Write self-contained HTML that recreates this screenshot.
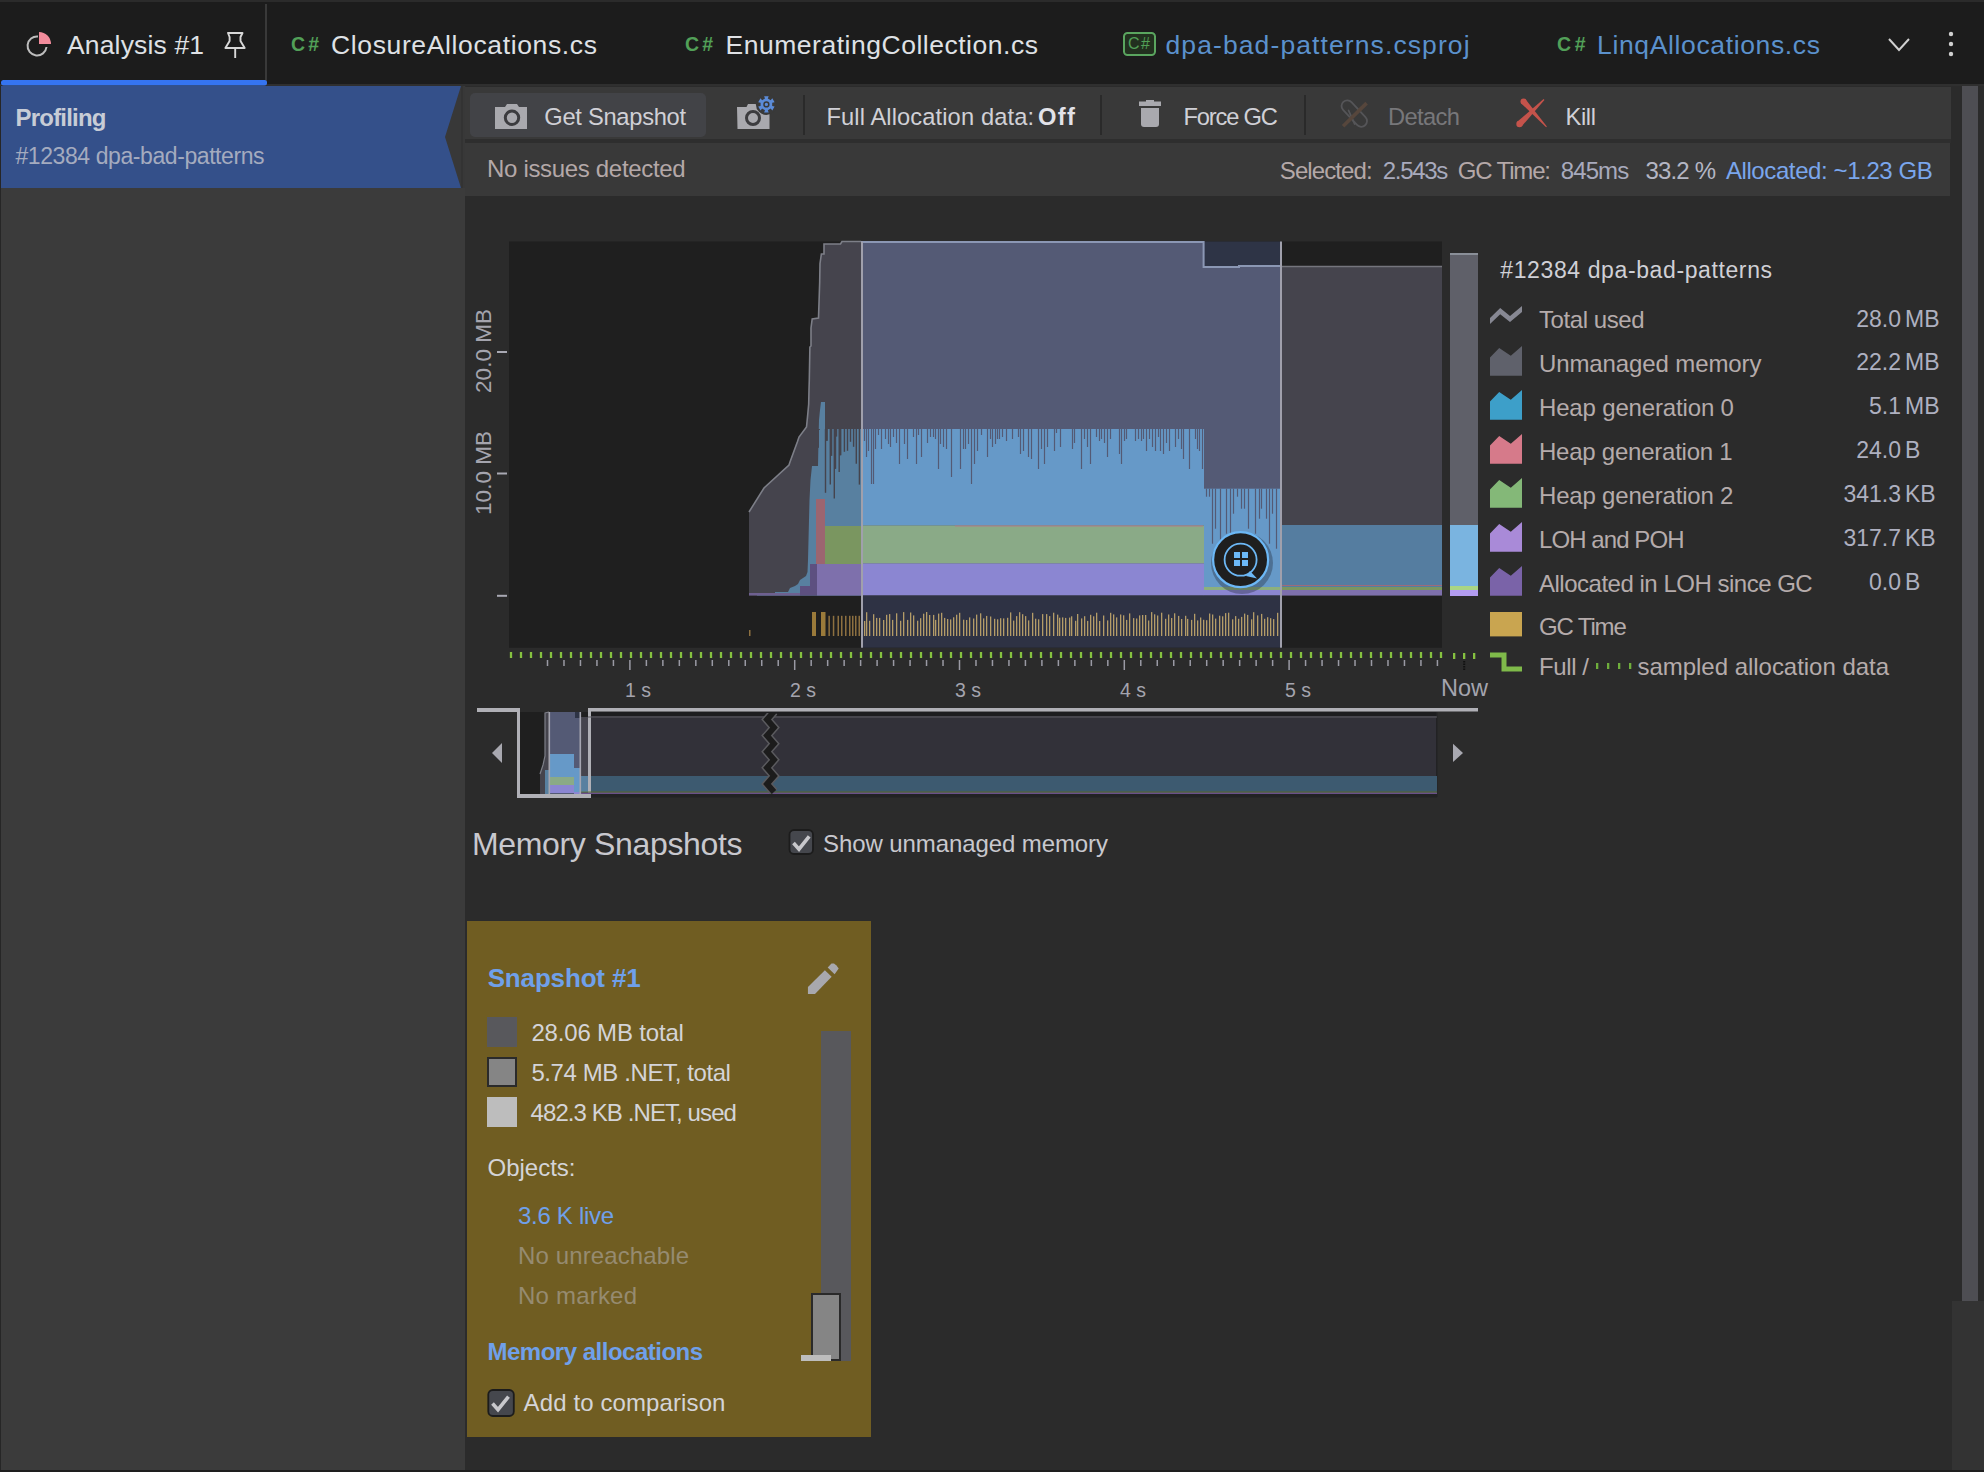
<!DOCTYPE html><html><head><meta charset="utf-8"><style>
html,body{margin:0;padding:0;width:1984px;height:1472px;overflow:hidden;background:#2b2b2b}
.t{position:absolute;white-space:pre;font-family:"Liberation Sans",sans-serif;line-height:1}
svg{position:absolute;left:0;top:0}
</style></head><body>
<svg width="1984" height="1472"><rect x="0" y="0" width="1984" height="1472" fill="#2b2b2b" />
<rect x="0" y="0" width="1984" height="2" fill="#2b2b2b" />
<rect x="0" y="2" width="1984" height="82" fill="#1c1c1c" />
<rect x="0" y="84" width="1984" height="2" fill="#2f2f2f" />
<rect x="265" y="4" width="2" height="80" fill="#393939" />
<rect x="1" y="80" width="266" height="5.5" rx="2.5" fill="#3574f0"/>
<rect x="0" y="86" width="465" height="1386" fill="#3b3b3b" />
<rect x="0" y="86" width="1" height="1386" fill="#262626" />
<rect x="445" y="86" width="20" height="102" fill="#383838" />
<rect x="461" y="86" width="2" height="102" fill="#333333" />
<polygon points="1,86 461,86 445,137 461,188 1,188" fill="#34508a" />
<rect x="465" y="86" width="1" height="110" fill="#2e2e2e" />
<rect x="465" y="87" width="1486" height="52" fill="#393939" />
<rect x="465" y="139" width="1486" height="4" fill="#2e2e2e" />
<rect x="465" y="143" width="1485" height="53" fill="#393939" />
<rect x="470" y="93" width="236" height="44" rx="5" fill="#424347"/>
<rect x="803" y="95" width="2" height="40" fill="#2a2a2a" />
<rect x="1100" y="95" width="2" height="40" fill="#2a2a2a" />
<rect x="1304" y="95" width="2" height="40" fill="#2a2a2a" />
<rect x="1962" y="86" width="16" height="1215" fill="#4e4e53" />
<rect x="1952" y="1301" width="32" height="169" fill="#333333" />
<rect x="0" y="1470" width="1984" height="2" fill="#1e1e1e" />
<path d="M 46.5 47 A 9.5 9.5 0 1 1 38 36.5" fill="none" stroke="#bdbdbd" stroke-width="2"/>
<path d="M 39 32 A 12 12 0 0 1 51 44 L 39 44 Z" fill="#f28c9c"/>
<path d="M228 33 h14.5 l-2 4 v4 l4.2 7 h-19.3 l4.2 -7 v-4 z M235.2 48.5 v9.5" fill="none" stroke="#d8d8d8" stroke-width="1.9" stroke-linejoin="round"/>
<rect x="1124" y="33" width="31" height="22" rx="3.5" fill="#22301f" stroke="#5aa55f" stroke-width="2"/>
<path d="M1889 39 L1899 50 L1909 39" fill="none" stroke="#d0d0d0" stroke-width="2"/>
<circle cx="1951" cy="34" r="2.2" fill="#d0d0d0"/>
<circle cx="1951" cy="44" r="2.2" fill="#d0d0d0"/>
<circle cx="1951" cy="54" r="2.2" fill="#d0d0d0"/>
<path d="M495 107 h10 l2 -3 h10 l2 3 h8 v22 h-32 z" fill="#a9a9ae"/>
<circle cx="512" cy="117.7" r="6.7" fill="none" stroke="#3c3c3f" stroke-width="3"/>
<path d="M737 107 h10 l2 -3 h9 v3 h4 l0 0 v0 h0 l0 0 v0" fill="none"/>
<path d="M737 107 h9.5 l1.5 -3 h9 l1.5 3 h11 v22 h-32 z" fill="#a9a9ae"/>
<circle cx="753" cy="118" r="6.5" fill="none" stroke="#3c3c3f" stroke-width="3"/>
<circle cx="766.4" cy="104.4" r="10.5" fill="#393939"/>
<polygon points="764.1,96.2 768.7,96.2 767.8,98.6 770.7,100.2 772.3,98.3 774.6,102.3 772.2,102.7 772.2,106.1 774.6,106.5 772.3,110.5 770.7,108.6 767.8,110.2 768.7,112.6 764.1,112.6 765.0,110.2 762.1,108.6 760.5,110.5 758.2,106.5 760.6,106.1 760.6,102.7 758.2,102.3 760.5,98.3 762.1,100.2 765.0,98.6" fill="#5b8bd8"/>
<circle cx="766.4" cy="104.4" r="2.4" fill="none" stroke="#393939" stroke-width="1.5"/>
<path d="M1139 101.5 h7 v-1.5 h8 v1.5 h7 v4.5 h-22 z" fill="#a9a9ae"/>
<path d="M1141 108 h18 v16 a3 3 0 0 1 -3 3 h-12 a3 3 0 0 1 -3 -3 z" fill="#a9a9ae"/>
<rect x="1338.3" y="107.8" width="32" height="11.5" rx="5.75" transform="rotate(47 1354.3 113.5)" fill="none" stroke="#555558" stroke-width="1.8"/>
<line x1="1348.6" y1="110.5" x2="1354.6" y2="124" stroke="#555558" stroke-width="1.8" stroke-linecap="round"/>
<line x1="1343.1" y1="126.3" x2="1366.6" y2="103.1" stroke="#56463c" stroke-width="3.6"/>
<polygon points="1521.28,103.52 1546.13,127.14 1546.87,126.46 1525.72,99.48" fill="#c5534b" />
<circle cx="1523.5" cy="101.5" r="3.0" fill="#c5534b"/>
<polygon points="1521.76,126.26 1544.42,99.92 1543.58,99.08 1517.24,121.74" fill="#c5534b" />
<circle cx="1519.5" cy="124" r="3.2" fill="#c5534b"/>
<rect x="509" y="241.5" width="933" height="406.2" fill="#1f1f1f" />
<polygon points="749,595.5 749,512 764,488 789,465 790,462 797.5,441.6 799,437 806.5,427 807.5,417 808.7,404 809,390 809.3,380 809.9,347 811,346 811,328 812.2,319 818.5,318 819.7,282 820,263.5 821.4,254 824,254 824,244 840.5,244 842,241.5 861,241.5 861,595.5" fill="#45444d" />
<rect x="861" y="241.5" width="342.6" height="354" fill="#545a75" />
<rect x="1203.6" y="241.5" width="77.4" height="25.5" fill="#2e3446" />
<rect x="1203" y="267" width="78" height="328.5" fill="#545a75" />
<rect x="1282" y="266" width="160" height="329.5" fill="#45444d" />
<polyline points="749,512 764,488 789,465 790,462 797.5,441.6 799,437 806.5,427 807.5,417 808.7,404 809,390 809.3,380 809.9,347 811,346 811,328 812.2,319 818.5,318 819.7,282 820,263.5 821.4,254 824,254 824,244 840.5,244 842,241.5 861,241.5" fill="none" stroke="#7d7f88" stroke-width="1.6"/>
<polyline points="861,242 1203.6,242 1203.6,267 1239,267 1239,266 1281,266" fill="none" stroke="#8b97b4" stroke-width="2"/>
<line x1="1282" y1="266.5" x2="1442" y2="266.5" stroke="#75757d" stroke-width="1.5" />
<polygon points="757,595.5 757,593 775,593 775,592 788,592 790,588 795,586 798,584 800,580 806,576 807.5,572 808,560 808.5,540 809,520 809.5,500 810.5,480 812,466 818,466 818.5,440 819,420 820,410 821,402 825,402 825,429 861,429 861,595.5" fill="#5880a0" />
<rect x="812" y="429" width="6" height="36.60000000000002" fill="#45444d" />
<rect x="818" y="429" width="1" height="18.80000000000001" fill="#45444d" />
<rect x="819" y="429" width="1" height="0.8000000000000114" fill="#45444d" />
<rect x="826" y="429" width="1.5" height="11.800000000000011" fill="#45444d" />
<rect x="830.3" y="429" width="1.3000000000000682" height="26.5" fill="#45444d" />
<rect x="834.3" y="429" width="1.7000000000000455" height="39.69999999999999" fill="#45444d" />
<rect x="839.2" y="429" width="1.5" height="26.30000000000001" fill="#45444d" />
<line x1="825.5" y1="429" x2="825.5" y2="492.8" stroke="#45444d" stroke-width="1.4" />
<line x1="827" y1="429" x2="827" y2="440.8" stroke="#45444d" stroke-width="1.4" />
<line x1="830.3" y1="429" x2="830.3" y2="484.6" stroke="#45444d" stroke-width="1.4" />
<line x1="831.6" y1="429" x2="831.6" y2="455.8" stroke="#45444d" stroke-width="1.4" />
<line x1="834.3" y1="429" x2="834.3" y2="498.6" stroke="#45444d" stroke-width="1.4" />
<line x1="835.5" y1="429" x2="835.5" y2="468.7" stroke="#45444d" stroke-width="1.4" />
<line x1="836.5" y1="429" x2="836.5" y2="436.6" stroke="#45444d" stroke-width="1.4" />
<line x1="839.2" y1="429" x2="839.2" y2="471.9" stroke="#45444d" stroke-width="1.4" />
<line x1="840.7" y1="429" x2="840.7" y2="455.3" stroke="#45444d" stroke-width="1.4" />
<line x1="844.4" y1="429" x2="844.4" y2="451.8" stroke="#45444d" stroke-width="1.4" />
<line x1="847.5" y1="429" x2="847.5" y2="450.8" stroke="#45444d" stroke-width="1.4" />
<line x1="850.5" y1="429" x2="850.5" y2="441.8" stroke="#45444d" stroke-width="1.4" />
<line x1="853.6" y1="429" x2="853.6" y2="446.8" stroke="#45444d" stroke-width="1.4" />
<line x1="856.3" y1="429" x2="856.3" y2="463.8" stroke="#45444d" stroke-width="1.4" />
<line x1="859.4" y1="429" x2="859.4" y2="484.6" stroke="#45444d" stroke-width="1.4" />
<rect x="816" y="499" width="9" height="65" fill="#9c6570" />
<rect x="825" y="526" width="36" height="38" fill="#7a9660" />
<rect x="817" y="564" width="44" height="31.5" fill="#7e70ac" />
<polygon points="800,595.5 800,586 810,586 810,564 817,564 817,595.5" fill="#5d5080" />
<rect x="749" y="593" width="51" height="2.5" fill="#6e6090" />
<rect x="863" y="429" width="341" height="96.5" fill="#6699c8" />
<line x1="864.5" y1="429" x2="864.5" y2="441" stroke="#545a75" stroke-width="1.2" />
<line x1="866.5" y1="429" x2="866.5" y2="457" stroke="#545a75" stroke-width="1.2" />
<line x1="868.5" y1="429" x2="868.5" y2="451" stroke="#545a75" stroke-width="1.2" />
<line x1="871.5" y1="429" x2="871.5" y2="484" stroke="#545a75" stroke-width="1.2" />
<line x1="873.5" y1="429" x2="873.5" y2="484" stroke="#545a75" stroke-width="1.2" />
<line x1="875.5" y1="429" x2="875.5" y2="449" stroke="#545a75" stroke-width="1.2" />
<line x1="878.5" y1="429" x2="878.5" y2="435" stroke="#545a75" stroke-width="1.2" />
<line x1="881.5" y1="429" x2="881.5" y2="449" stroke="#545a75" stroke-width="1.2" />
<line x1="885.5" y1="429" x2="885.5" y2="439" stroke="#545a75" stroke-width="1.2" />
<line x1="888.5" y1="429" x2="888.5" y2="444" stroke="#545a75" stroke-width="1.2" />
<line x1="890.5" y1="429" x2="890.5" y2="447" stroke="#545a75" stroke-width="1.2" />
<line x1="893.5" y1="429" x2="893.5" y2="437" stroke="#545a75" stroke-width="1.2" />
<line x1="896.5" y1="429" x2="896.5" y2="443" stroke="#545a75" stroke-width="1.2" />
<line x1="899.5" y1="429" x2="899.5" y2="464" stroke="#545a75" stroke-width="1.2" />
<line x1="904.5" y1="429" x2="904.5" y2="444" stroke="#545a75" stroke-width="1.2" />
<line x1="907.5" y1="429" x2="907.5" y2="459" stroke="#545a75" stroke-width="1.2" />
<line x1="913.5" y1="429" x2="913.5" y2="437" stroke="#545a75" stroke-width="1.2" />
<line x1="916.5" y1="429" x2="916.5" y2="464" stroke="#545a75" stroke-width="1.2" />
<line x1="918.5" y1="429" x2="918.5" y2="435" stroke="#545a75" stroke-width="1.2" />
<line x1="921.5" y1="429" x2="921.5" y2="457" stroke="#545a75" stroke-width="1.2" />
<line x1="927.5" y1="429" x2="927.5" y2="443" stroke="#545a75" stroke-width="1.2" />
<line x1="930.5" y1="429" x2="930.5" y2="437" stroke="#545a75" stroke-width="1.2" />
<line x1="933.5" y1="429" x2="933.5" y2="437" stroke="#545a75" stroke-width="1.2" />
<line x1="935.5" y1="429" x2="935.5" y2="439" stroke="#545a75" stroke-width="1.2" />
<line x1="938.5" y1="429" x2="938.5" y2="469" stroke="#545a75" stroke-width="1.2" />
<line x1="940.5" y1="429" x2="940.5" y2="444" stroke="#545a75" stroke-width="1.2" />
<line x1="943.5" y1="429" x2="943.5" y2="447" stroke="#545a75" stroke-width="1.2" />
<line x1="946.5" y1="429" x2="946.5" y2="449" stroke="#545a75" stroke-width="1.2" />
<line x1="951.5" y1="429" x2="951.5" y2="477" stroke="#545a75" stroke-width="1.2" />
<line x1="960.5" y1="429" x2="960.5" y2="469" stroke="#545a75" stroke-width="1.2" />
<line x1="963.5" y1="429" x2="963.5" y2="449" stroke="#545a75" stroke-width="1.2" />
<line x1="965.5" y1="429" x2="965.5" y2="449" stroke="#545a75" stroke-width="1.2" />
<line x1="968.5" y1="429" x2="968.5" y2="444" stroke="#545a75" stroke-width="1.2" />
<line x1="971.5" y1="429" x2="971.5" y2="484" stroke="#545a75" stroke-width="1.2" />
<line x1="974.5" y1="429" x2="974.5" y2="464" stroke="#545a75" stroke-width="1.2" />
<line x1="977.5" y1="429" x2="977.5" y2="451" stroke="#545a75" stroke-width="1.2" />
<line x1="981.5" y1="429" x2="981.5" y2="435" stroke="#545a75" stroke-width="1.2" />
<line x1="987.5" y1="429" x2="987.5" y2="457" stroke="#545a75" stroke-width="1.2" />
<line x1="990.5" y1="429" x2="990.5" y2="439" stroke="#545a75" stroke-width="1.2" />
<line x1="992.5" y1="429" x2="992.5" y2="447" stroke="#545a75" stroke-width="1.2" />
<line x1="995.5" y1="429" x2="995.5" y2="444" stroke="#545a75" stroke-width="1.2" />
<line x1="997.5" y1="429" x2="997.5" y2="439" stroke="#545a75" stroke-width="1.2" />
<line x1="999.5" y1="429" x2="999.5" y2="439" stroke="#545a75" stroke-width="1.2" />
<line x1="1002.5" y1="429" x2="1002.5" y2="437" stroke="#545a75" stroke-width="1.2" />
<line x1="1006.5" y1="429" x2="1006.5" y2="441" stroke="#545a75" stroke-width="1.2" />
<line x1="1012.5" y1="429" x2="1012.5" y2="439" stroke="#545a75" stroke-width="1.2" />
<line x1="1018.5" y1="429" x2="1018.5" y2="437" stroke="#545a75" stroke-width="1.2" />
<line x1="1020.5" y1="429" x2="1020.5" y2="454" stroke="#545a75" stroke-width="1.2" />
<line x1="1023.5" y1="429" x2="1023.5" y2="451" stroke="#545a75" stroke-width="1.2" />
<line x1="1028.5" y1="429" x2="1028.5" y2="457" stroke="#545a75" stroke-width="1.2" />
<line x1="1031.5" y1="429" x2="1031.5" y2="459" stroke="#545a75" stroke-width="1.2" />
<line x1="1038.5" y1="429" x2="1038.5" y2="469" stroke="#545a75" stroke-width="1.2" />
<line x1="1041.5" y1="429" x2="1041.5" y2="449" stroke="#545a75" stroke-width="1.2" />
<line x1="1044.5" y1="429" x2="1044.5" y2="464" stroke="#545a75" stroke-width="1.2" />
<line x1="1047.5" y1="429" x2="1047.5" y2="447" stroke="#545a75" stroke-width="1.2" />
<line x1="1054.5" y1="429" x2="1054.5" y2="451" stroke="#545a75" stroke-width="1.2" />
<line x1="1056.5" y1="429" x2="1056.5" y2="433" stroke="#545a75" stroke-width="1.2" />
<line x1="1060.5" y1="429" x2="1060.5" y2="447" stroke="#545a75" stroke-width="1.2" />
<line x1="1072.5" y1="429" x2="1072.5" y2="449" stroke="#545a75" stroke-width="1.2" />
<line x1="1074.5" y1="429" x2="1074.5" y2="443" stroke="#545a75" stroke-width="1.2" />
<line x1="1081.5" y1="429" x2="1081.5" y2="469" stroke="#545a75" stroke-width="1.2" />
<line x1="1084.5" y1="429" x2="1084.5" y2="439" stroke="#545a75" stroke-width="1.2" />
<line x1="1087.5" y1="429" x2="1087.5" y2="447" stroke="#545a75" stroke-width="1.2" />
<line x1="1090.5" y1="429" x2="1090.5" y2="464" stroke="#545a75" stroke-width="1.2" />
<line x1="1096.5" y1="429" x2="1096.5" y2="437" stroke="#545a75" stroke-width="1.2" />
<line x1="1099.5" y1="429" x2="1099.5" y2="441" stroke="#545a75" stroke-width="1.2" />
<line x1="1101.5" y1="429" x2="1101.5" y2="439" stroke="#545a75" stroke-width="1.2" />
<line x1="1104.5" y1="429" x2="1104.5" y2="443" stroke="#545a75" stroke-width="1.2" />
<line x1="1107.5" y1="429" x2="1107.5" y2="457" stroke="#545a75" stroke-width="1.2" />
<line x1="1110.5" y1="429" x2="1110.5" y2="439" stroke="#545a75" stroke-width="1.2" />
<line x1="1119.5" y1="429" x2="1119.5" y2="454" stroke="#545a75" stroke-width="1.2" />
<line x1="1121.5" y1="429" x2="1121.5" y2="464" stroke="#545a75" stroke-width="1.2" />
<line x1="1124.5" y1="429" x2="1124.5" y2="441" stroke="#545a75" stroke-width="1.2" />
<line x1="1126.5" y1="429" x2="1126.5" y2="439" stroke="#545a75" stroke-width="1.2" />
<line x1="1135.5" y1="429" x2="1135.5" y2="441" stroke="#545a75" stroke-width="1.2" />
<line x1="1138.5" y1="429" x2="1138.5" y2="439" stroke="#545a75" stroke-width="1.2" />
<line x1="1141.5" y1="429" x2="1141.5" y2="441" stroke="#545a75" stroke-width="1.2" />
<line x1="1143.5" y1="429" x2="1143.5" y2="439" stroke="#545a75" stroke-width="1.2" />
<line x1="1146.5" y1="429" x2="1146.5" y2="451" stroke="#545a75" stroke-width="1.2" />
<line x1="1149.5" y1="429" x2="1149.5" y2="439" stroke="#545a75" stroke-width="1.2" />
<line x1="1152.5" y1="429" x2="1152.5" y2="447" stroke="#545a75" stroke-width="1.2" />
<line x1="1155.5" y1="429" x2="1155.5" y2="451" stroke="#545a75" stroke-width="1.2" />
<line x1="1158.5" y1="429" x2="1158.5" y2="437" stroke="#545a75" stroke-width="1.2" />
<line x1="1160.5" y1="429" x2="1160.5" y2="451" stroke="#545a75" stroke-width="1.2" />
<line x1="1163.5" y1="429" x2="1163.5" y2="454" stroke="#545a75" stroke-width="1.2" />
<line x1="1166.5" y1="429" x2="1166.5" y2="443" stroke="#545a75" stroke-width="1.2" />
<line x1="1169.5" y1="429" x2="1169.5" y2="451" stroke="#545a75" stroke-width="1.2" />
<line x1="1175.5" y1="429" x2="1175.5" y2="447" stroke="#545a75" stroke-width="1.2" />
<line x1="1178.5" y1="429" x2="1178.5" y2="439" stroke="#545a75" stroke-width="1.2" />
<line x1="1181.5" y1="429" x2="1181.5" y2="449" stroke="#545a75" stroke-width="1.2" />
<line x1="1183.5" y1="429" x2="1183.5" y2="459" stroke="#545a75" stroke-width="1.2" />
<line x1="1189.5" y1="429" x2="1189.5" y2="469" stroke="#545a75" stroke-width="1.2" />
<line x1="1195.5" y1="429" x2="1195.5" y2="439" stroke="#545a75" stroke-width="1.2" />
<line x1="1197.5" y1="429" x2="1197.5" y2="449" stroke="#545a75" stroke-width="1.2" />
<line x1="1199.5" y1="429" x2="1199.5" y2="451" stroke="#545a75" stroke-width="1.2" />
<line x1="1202.5" y1="429" x2="1202.5" y2="469" stroke="#545a75" stroke-width="1.2" />
<rect x="1204" y="488.7" width="76" height="98.3" fill="#6699c8" />
<line x1="1206.5" y1="488.7" x2="1206.5" y2="496.7" stroke="#545a75" stroke-width="1.2" />
<line x1="1209.5" y1="488.7" x2="1209.5" y2="496.7" stroke="#545a75" stroke-width="1.2" />
<line x1="1212.5" y1="488.7" x2="1212.5" y2="543.7" stroke="#545a75" stroke-width="1.2" />
<line x1="1215.5" y1="488.7" x2="1215.5" y2="528.7" stroke="#545a75" stroke-width="1.2" />
<line x1="1220.5" y1="488.7" x2="1220.5" y2="543.7" stroke="#545a75" stroke-width="1.2" />
<line x1="1226.5" y1="488.7" x2="1226.5" y2="533.7" stroke="#545a75" stroke-width="1.2" />
<line x1="1230.5" y1="488.7" x2="1230.5" y2="543.7" stroke="#545a75" stroke-width="1.2" />
<line x1="1233.5" y1="488.7" x2="1233.5" y2="513.7" stroke="#545a75" stroke-width="1.2" />
<line x1="1237.5" y1="488.7" x2="1237.5" y2="496.7" stroke="#545a75" stroke-width="1.2" />
<line x1="1241.5" y1="488.7" x2="1241.5" y2="508.7" stroke="#545a75" stroke-width="1.2" />
<line x1="1244.5" y1="488.7" x2="1244.5" y2="508.7" stroke="#545a75" stroke-width="1.2" />
<line x1="1248.5" y1="488.7" x2="1248.5" y2="528.7" stroke="#545a75" stroke-width="1.2" />
<line x1="1255.5" y1="488.7" x2="1255.5" y2="533.7" stroke="#545a75" stroke-width="1.2" />
<line x1="1259.5" y1="488.7" x2="1259.5" y2="518.7" stroke="#545a75" stroke-width="1.2" />
<line x1="1261.5" y1="488.7" x2="1261.5" y2="508.7" stroke="#545a75" stroke-width="1.2" />
<line x1="1266.5" y1="488.7" x2="1266.5" y2="518.7" stroke="#545a75" stroke-width="1.2" />
<line x1="1269.5" y1="488.7" x2="1269.5" y2="543.7" stroke="#545a75" stroke-width="1.2" />
<line x1="1272.5" y1="488.7" x2="1272.5" y2="513.7" stroke="#545a75" stroke-width="1.2" />
<line x1="1276.5" y1="488.7" x2="1276.5" y2="548.7" stroke="#545a75" stroke-width="1.2" />
<rect x="863" y="525.5" width="341" height="38" fill="#8aaa87" />
<line x1="955" y1="526" x2="1203" y2="526" stroke="#b07a8a" stroke-width="1" />
<rect x="863" y="563.5" width="341" height="32" fill="#8b86d2" />
<rect x="1204" y="587" width="76" height="3" fill="#8cb07e" />
<rect x="1204" y="590" width="76" height="5.5" fill="#8b86d2" />
<rect x="1282" y="525" width="160" height="62" fill="#557da0" />
<line x1="1282" y1="585.5" x2="1442" y2="585.5" stroke="#a06a78" stroke-width="1" />
<rect x="1282" y="587" width="160" height="3" fill="#7a9660" />
<rect x="1282" y="590" width="160" height="5.5" fill="#7e70ac" />
<rect x="861" y="595.5" width="420" height="52.2" fill="#2e3244" />
<rect x="749" y="630" width="1.5" height="6" fill="#8d7040" />
<rect x="812" y="612" width="4" height="24" fill="#9a7a3a" />
<rect x="821" y="612" width="4.5" height="24" fill="#9a7a3a" />
<rect x="828.4" y="615.8" width="1.5" height="20.2" fill="#8d7040" />
<rect x="832.8" y="615.8" width="1.5" height="20.2" fill="#8d7040" />
<rect x="837.5" y="615.8" width="1.5" height="20.2" fill="#8d7040" />
<rect x="841" y="615.8" width="1.5" height="20.2" fill="#8d7040" />
<rect x="845" y="615.8" width="1.5" height="20.2" fill="#8d7040" />
<rect x="849" y="615.8" width="1.5" height="20.2" fill="#8d7040" />
<rect x="852" y="615.8" width="1.5" height="20.2" fill="#8d7040" />
<rect x="855" y="615.8" width="1.5" height="20.2" fill="#8d7040" />
<rect x="858.5" y="615.8" width="1.5" height="20.2" fill="#8d7040" />
<rect x="864" y="621.0" width="1.3" height="15.0" fill="#b49c68" />
<rect x="866" y="612.2" width="1.3" height="23.8" fill="#b49c68" />
<rect x="869" y="620.8" width="1.3" height="15.2" fill="#b49c68" />
<rect x="873" y="614.2" width="1.3" height="21.8" fill="#b49c68" />
<rect x="876" y="617.9" width="1.3" height="18.1" fill="#b49c68" />
<rect x="879" y="617.9" width="1.3" height="18.1" fill="#b49c68" />
<rect x="883" y="620.0" width="1.3" height="16.0" fill="#b49c68" />
<rect x="886" y="614.8" width="1.3" height="21.2" fill="#b49c68" />
<rect x="889" y="614.1" width="1.3" height="21.9" fill="#b49c68" />
<rect x="892" y="619.9" width="1.3" height="16.1" fill="#b49c68" />
<rect x="896" y="613.3" width="1.3" height="22.7" fill="#b49c68" />
<rect x="900" y="620.8" width="1.3" height="15.2" fill="#b49c68" />
<rect x="903" y="612.1" width="1.3" height="23.9" fill="#b49c68" />
<rect x="907" y="619.9" width="1.3" height="16.1" fill="#b49c68" />
<rect x="910" y="612.5" width="1.3" height="23.5" fill="#b49c68" />
<rect x="913" y="615.4" width="1.3" height="20.6" fill="#b49c68" />
<rect x="917" y="620.7" width="1.3" height="15.3" fill="#b49c68" />
<rect x="920" y="618.2" width="1.3" height="17.8" fill="#b49c68" />
<rect x="923" y="613.7" width="1.3" height="22.3" fill="#b49c68" />
<rect x="926" y="612.0" width="1.3" height="24.0" fill="#b49c68" />
<rect x="929" y="615.0" width="1.3" height="21.0" fill="#b49c68" />
<rect x="933" y="614.9" width="1.3" height="21.1" fill="#b49c68" />
<rect x="935" y="619.9" width="1.3" height="16.1" fill="#b49c68" />
<rect x="938" y="613.6" width="1.3" height="22.4" fill="#b49c68" />
<rect x="941" y="612.8" width="1.3" height="23.2" fill="#b49c68" />
<rect x="944" y="617.9" width="1.3" height="18.1" fill="#b49c68" />
<rect x="947" y="619.0" width="1.3" height="17.0" fill="#b49c68" />
<rect x="950" y="619.4" width="1.3" height="16.6" fill="#b49c68" />
<rect x="953" y="617.3" width="1.3" height="18.7" fill="#b49c68" />
<rect x="956" y="614.7" width="1.3" height="21.3" fill="#b49c68" />
<rect x="959" y="612.8" width="1.3" height="23.2" fill="#b49c68" />
<rect x="963" y="619.7" width="1.3" height="16.3" fill="#b49c68" />
<rect x="966" y="620.0" width="1.3" height="16.0" fill="#b49c68" />
<rect x="969" y="617.4" width="1.3" height="18.6" fill="#b49c68" />
<rect x="973" y="618.5" width="1.3" height="17.5" fill="#b49c68" />
<rect x="976" y="614.6" width="1.3" height="21.4" fill="#b49c68" />
<rect x="980" y="613.3" width="1.3" height="22.7" fill="#b49c68" />
<rect x="983" y="618.4" width="1.3" height="17.6" fill="#b49c68" />
<rect x="986" y="615.9" width="1.3" height="20.1" fill="#b49c68" />
<rect x="990" y="616.5" width="1.3" height="19.5" fill="#b49c68" />
<rect x="994" y="618.8" width="1.3" height="17.2" fill="#b49c68" />
<rect x="997" y="619.3" width="1.3" height="16.7" fill="#b49c68" />
<rect x="1000" y="618.2" width="1.3" height="17.8" fill="#b49c68" />
<rect x="1003" y="618.4" width="1.3" height="17.6" fill="#b49c68" />
<rect x="1007" y="617.8" width="1.3" height="18.2" fill="#b49c68" />
<rect x="1010" y="612.4" width="1.3" height="23.6" fill="#b49c68" />
<rect x="1013" y="620.6" width="1.3" height="15.4" fill="#b49c68" />
<rect x="1016" y="616.1" width="1.3" height="19.9" fill="#b49c68" />
<rect x="1019" y="612.2" width="1.3" height="23.8" fill="#b49c68" />
<rect x="1022" y="614.2" width="1.3" height="21.8" fill="#b49c68" />
<rect x="1025" y="616.1" width="1.3" height="19.9" fill="#b49c68" />
<rect x="1028" y="620.4" width="1.3" height="15.6" fill="#b49c68" />
<rect x="1032" y="612.8" width="1.3" height="23.2" fill="#b49c68" />
<rect x="1035" y="618.7" width="1.3" height="17.3" fill="#b49c68" />
<rect x="1038" y="619.3" width="1.3" height="16.7" fill="#b49c68" />
<rect x="1042" y="614.1" width="1.3" height="21.9" fill="#b49c68" />
<rect x="1046" y="614.1" width="1.3" height="21.9" fill="#b49c68" />
<rect x="1049" y="616.1" width="1.3" height="19.9" fill="#b49c68" />
<rect x="1053" y="612.7" width="1.3" height="23.3" fill="#b49c68" />
<rect x="1057" y="614.6" width="1.3" height="21.4" fill="#b49c68" />
<rect x="1059" y="617.7" width="1.3" height="18.3" fill="#b49c68" />
<rect x="1062" y="617.4" width="1.3" height="18.6" fill="#b49c68" />
<rect x="1065" y="617.9" width="1.3" height="18.1" fill="#b49c68" />
<rect x="1069" y="617.6" width="1.3" height="18.4" fill="#b49c68" />
<rect x="1071" y="616.3" width="1.3" height="19.7" fill="#b49c68" />
<rect x="1075" y="620.8" width="1.3" height="15.2" fill="#b49c68" />
<rect x="1077" y="614.0" width="1.3" height="22.0" fill="#b49c68" />
<rect x="1081" y="618.4" width="1.3" height="17.6" fill="#b49c68" />
<rect x="1084" y="616.2" width="1.3" height="19.8" fill="#b49c68" />
<rect x="1087" y="620.9" width="1.3" height="15.1" fill="#b49c68" />
<rect x="1090" y="614.8" width="1.3" height="21.2" fill="#b49c68" />
<rect x="1093" y="616.3" width="1.3" height="19.7" fill="#b49c68" />
<rect x="1096" y="612.7" width="1.3" height="23.3" fill="#b49c68" />
<rect x="1099" y="621.0" width="1.3" height="15.0" fill="#b49c68" />
<rect x="1103" y="615.5" width="1.3" height="20.5" fill="#b49c68" />
<rect x="1107" y="620.4" width="1.3" height="15.6" fill="#b49c68" />
<rect x="1110" y="612.8" width="1.3" height="23.2" fill="#b49c68" />
<rect x="1113" y="614.4" width="1.3" height="21.6" fill="#b49c68" />
<rect x="1116" y="617.4" width="1.3" height="18.6" fill="#b49c68" />
<rect x="1120" y="614.5" width="1.3" height="21.5" fill="#b49c68" />
<rect x="1123" y="615.3" width="1.3" height="20.7" fill="#b49c68" />
<rect x="1126" y="619.9" width="1.3" height="16.1" fill="#b49c68" />
<rect x="1129" y="613.4" width="1.3" height="22.6" fill="#b49c68" />
<rect x="1133" y="618.1" width="1.3" height="17.9" fill="#b49c68" />
<rect x="1136" y="618.5" width="1.3" height="17.5" fill="#b49c68" />
<rect x="1139" y="615.4" width="1.3" height="20.6" fill="#b49c68" />
<rect x="1142" y="615.0" width="1.3" height="21.0" fill="#b49c68" />
<rect x="1145" y="615.0" width="1.3" height="21.0" fill="#b49c68" />
<rect x="1148" y="620.5" width="1.3" height="15.5" fill="#b49c68" />
<rect x="1151" y="612.1" width="1.3" height="23.9" fill="#b49c68" />
<rect x="1154" y="614.3" width="1.3" height="21.7" fill="#b49c68" />
<rect x="1157" y="615.5" width="1.3" height="20.5" fill="#b49c68" />
<rect x="1161" y="612.7" width="1.3" height="23.3" fill="#b49c68" />
<rect x="1165" y="618.8" width="1.3" height="17.2" fill="#b49c68" />
<rect x="1168" y="614.5" width="1.3" height="21.5" fill="#b49c68" />
<rect x="1171" y="618.0" width="1.3" height="18.0" fill="#b49c68" />
<rect x="1174" y="613.3" width="1.3" height="22.7" fill="#b49c68" />
<rect x="1178" y="615.9" width="1.3" height="20.1" fill="#b49c68" />
<rect x="1181" y="619.0" width="1.3" height="17.0" fill="#b49c68" />
<rect x="1185" y="615.8" width="1.3" height="20.2" fill="#b49c68" />
<rect x="1187" y="618.9" width="1.3" height="17.1" fill="#b49c68" />
<rect x="1191" y="619.9" width="1.3" height="16.1" fill="#b49c68" />
<rect x="1194" y="613.8" width="1.3" height="22.2" fill="#b49c68" />
<rect x="1197" y="620.4" width="1.3" height="15.6" fill="#b49c68" />
<rect x="1200" y="617.5" width="1.3" height="18.5" fill="#b49c68" />
<rect x="1203" y="619.8" width="1.3" height="16.2" fill="#b49c68" />
<rect x="1206" y="620.2" width="1.3" height="15.8" fill="#b49c68" />
<rect x="1209" y="613.5" width="1.3" height="22.5" fill="#b49c68" />
<rect x="1212" y="614.5" width="1.3" height="21.5" fill="#b49c68" />
<rect x="1215" y="618.6" width="1.3" height="17.4" fill="#b49c68" />
<rect x="1219" y="615.7" width="1.3" height="20.3" fill="#b49c68" />
<rect x="1222" y="616.3" width="1.3" height="19.7" fill="#b49c68" />
<rect x="1225" y="613.1" width="1.3" height="22.9" fill="#b49c68" />
<rect x="1228" y="612.7" width="1.3" height="23.3" fill="#b49c68" />
<rect x="1232" y="619.3" width="1.3" height="16.7" fill="#b49c68" />
<rect x="1235" y="616.1" width="1.3" height="19.9" fill="#b49c68" />
<rect x="1238" y="618.8" width="1.3" height="17.2" fill="#b49c68" />
<rect x="1241" y="616.9" width="1.3" height="19.1" fill="#b49c68" />
<rect x="1244" y="613.6" width="1.3" height="22.4" fill="#b49c68" />
<rect x="1247" y="614.9" width="1.3" height="21.1" fill="#b49c68" />
<rect x="1251" y="619.3" width="1.3" height="16.7" fill="#b49c68" />
<rect x="1253" y="612.2" width="1.3" height="23.8" fill="#b49c68" />
<rect x="1257" y="615.4" width="1.3" height="20.6" fill="#b49c68" />
<rect x="1261" y="613.9" width="1.3" height="22.1" fill="#b49c68" />
<rect x="1264" y="618.8" width="1.3" height="17.2" fill="#b49c68" />
<rect x="1267" y="617.2" width="1.3" height="18.8" fill="#b49c68" />
<rect x="1270" y="618.2" width="1.3" height="17.8" fill="#b49c68" />
<rect x="1273" y="619.1" width="1.3" height="16.9" fill="#b49c68" />
<rect x="1277" y="612.8" width="1.3" height="23.2" fill="#b49c68" />
<rect x="861" y="241.5" width="2" height="406.2" fill="#a0a0ac" />
<rect x="1280" y="241.5" width="2" height="406.2" fill="#a0a0ac" />
<circle cx="1242" cy="563" r="31" fill="#1f2430" opacity="0.35"/>
<circle cx="1240.6" cy="559.7" r="27.5" fill="#1f1f1f" stroke="#6cb8f6" stroke-width="2.2"/>
<circle cx="1240.6" cy="559.7" r="16" fill="none" stroke="#6cb8f6" stroke-width="1.8"/>
<path d="M1250 571 L1257 578.5 L1246 576 Z" fill="#6cb8f6"/>
<rect x="1234" y="552" width="6" height="6" fill="#6cb8f6" />
<rect x="1234" y="560" width="6" height="6" fill="#6cb8f6" />
<rect x="1242" y="552" width="6" height="6" fill="#6cb8f6" />
<rect x="1242" y="560" width="6" height="6" fill="#6cb8f6" />
<rect x="1450" y="254" width="28" height="271" fill="#5f6069" />
<rect x="1450" y="253" width="28" height="2" fill="#8a8f98" />
<rect x="1450" y="525" width="28" height="61" fill="#7ab4e0" />
<rect x="1450" y="586" width="28" height="4" fill="#a9d585" />
<rect x="1450" y="590" width="28" height="6" fill="#b39cf0" />
<rect x="497" y="351" width="10" height="2" fill="#a9a9b3" />
<rect x="497" y="472.5" width="10" height="2" fill="#a9a9b3" />
<rect x="497" y="594.8" width="10" height="2" fill="#a9a9b3" />
<rect x="509.85" y="652" width="2.3" height="6" fill="#86c240" />
<rect x="519.85" y="652" width="2.3" height="6" fill="#86c240" />
<rect x="529.85" y="652" width="2.3" height="6" fill="#86c240" />
<rect x="539.85" y="652" width="2.3" height="6" fill="#86c240" />
<rect x="549.85" y="652" width="2.3" height="6" fill="#86c240" />
<rect x="559.85" y="652" width="2.3" height="6" fill="#86c240" />
<rect x="569.85" y="652" width="2.3" height="6" fill="#86c240" />
<rect x="579.85" y="652" width="2.3" height="6" fill="#86c240" />
<rect x="589.85" y="652" width="2.3" height="6" fill="#86c240" />
<rect x="599.85" y="652" width="2.3" height="6" fill="#86c240" />
<rect x="609.85" y="652" width="2.3" height="6" fill="#86c240" />
<rect x="619.85" y="652" width="2.3" height="6" fill="#86c240" />
<rect x="629.85" y="652" width="2.3" height="6" fill="#86c240" />
<rect x="639.85" y="652" width="2.3" height="6" fill="#86c240" />
<rect x="649.85" y="652" width="2.3" height="6" fill="#86c240" />
<rect x="659.85" y="652" width="2.3" height="6" fill="#86c240" />
<rect x="669.85" y="652" width="2.3" height="6" fill="#86c240" />
<rect x="679.85" y="652" width="2.3" height="6" fill="#86c240" />
<rect x="689.85" y="652" width="2.3" height="6" fill="#86c240" />
<rect x="699.85" y="652" width="2.3" height="6" fill="#86c240" />
<rect x="709.85" y="652" width="2.3" height="6" fill="#86c240" />
<rect x="719.85" y="652" width="2.3" height="6" fill="#86c240" />
<rect x="729.85" y="652" width="2.3" height="6" fill="#86c240" />
<rect x="739.85" y="652" width="2.3" height="6" fill="#86c240" />
<rect x="749.85" y="652" width="2.3" height="6" fill="#86c240" />
<rect x="759.85" y="652" width="2.3" height="6" fill="#86c240" />
<rect x="769.85" y="652" width="2.3" height="6" fill="#86c240" />
<rect x="779.85" y="652" width="2.3" height="6" fill="#86c240" />
<rect x="789.85" y="652" width="2.3" height="6" fill="#86c240" />
<rect x="799.85" y="652" width="2.3" height="6" fill="#86c240" />
<rect x="809.85" y="652" width="2.3" height="6" fill="#86c240" />
<rect x="819.85" y="652" width="2.3" height="6" fill="#86c240" />
<rect x="829.85" y="652" width="2.3" height="6" fill="#86c240" />
<rect x="839.85" y="652" width="2.3" height="6" fill="#86c240" />
<rect x="849.85" y="652" width="2.3" height="6" fill="#86c240" />
<rect x="859.85" y="652" width="2.3" height="6" fill="#86c240" />
<rect x="869.85" y="652" width="2.3" height="6" fill="#86c240" />
<rect x="879.85" y="652" width="2.3" height="6" fill="#86c240" />
<rect x="889.85" y="652" width="2.3" height="6" fill="#86c240" />
<rect x="899.85" y="652" width="2.3" height="6" fill="#86c240" />
<rect x="909.85" y="652" width="2.3" height="6" fill="#86c240" />
<rect x="919.85" y="652" width="2.3" height="6" fill="#86c240" />
<rect x="929.85" y="652" width="2.3" height="6" fill="#86c240" />
<rect x="939.85" y="652" width="2.3" height="6" fill="#86c240" />
<rect x="949.85" y="652" width="2.3" height="6" fill="#86c240" />
<rect x="959.85" y="652" width="2.3" height="6" fill="#86c240" />
<rect x="969.85" y="652" width="2.3" height="6" fill="#86c240" />
<rect x="979.85" y="652" width="2.3" height="6" fill="#86c240" />
<rect x="989.85" y="652" width="2.3" height="6" fill="#86c240" />
<rect x="999.85" y="652" width="2.3" height="6" fill="#86c240" />
<rect x="1009.85" y="652" width="2.3" height="6" fill="#86c240" />
<rect x="1019.85" y="652" width="2.3" height="6" fill="#86c240" />
<rect x="1029.85" y="652" width="2.3" height="6" fill="#86c240" />
<rect x="1039.85" y="652" width="2.3" height="6" fill="#86c240" />
<rect x="1049.85" y="652" width="2.3" height="6" fill="#86c240" />
<rect x="1059.85" y="652" width="2.3" height="6" fill="#86c240" />
<rect x="1069.85" y="652" width="2.3" height="6" fill="#86c240" />
<rect x="1079.85" y="652" width="2.3" height="6" fill="#86c240" />
<rect x="1089.85" y="652" width="2.3" height="6" fill="#86c240" />
<rect x="1099.85" y="652" width="2.3" height="6" fill="#86c240" />
<rect x="1109.85" y="652" width="2.3" height="6" fill="#86c240" />
<rect x="1119.85" y="652" width="2.3" height="6" fill="#86c240" />
<rect x="1129.85" y="652" width="2.3" height="6" fill="#86c240" />
<rect x="1139.85" y="652" width="2.3" height="6" fill="#86c240" />
<rect x="1149.85" y="652" width="2.3" height="6" fill="#86c240" />
<rect x="1159.85" y="652" width="2.3" height="6" fill="#86c240" />
<rect x="1169.85" y="652" width="2.3" height="6" fill="#86c240" />
<rect x="1179.85" y="652" width="2.3" height="6" fill="#86c240" />
<rect x="1189.85" y="652" width="2.3" height="6" fill="#86c240" />
<rect x="1199.85" y="652" width="2.3" height="6" fill="#86c240" />
<rect x="1209.85" y="652" width="2.3" height="6" fill="#86c240" />
<rect x="1219.85" y="652" width="2.3" height="6" fill="#86c240" />
<rect x="1229.85" y="652" width="2.3" height="6" fill="#86c240" />
<rect x="1239.85" y="652" width="2.3" height="6" fill="#86c240" />
<rect x="1249.85" y="652" width="2.3" height="6" fill="#86c240" />
<rect x="1259.85" y="652" width="2.3" height="6" fill="#86c240" />
<rect x="1269.85" y="652" width="2.3" height="6" fill="#86c240" />
<rect x="1279.85" y="652" width="2.3" height="6" fill="#86c240" />
<rect x="1289.85" y="652" width="2.3" height="6" fill="#86c240" />
<rect x="1299.85" y="652" width="2.3" height="6" fill="#86c240" />
<rect x="1309.85" y="652" width="2.3" height="6" fill="#86c240" />
<rect x="1319.85" y="652" width="2.3" height="6" fill="#86c240" />
<rect x="1329.85" y="652" width="2.3" height="6" fill="#86c240" />
<rect x="1339.85" y="652" width="2.3" height="6" fill="#86c240" />
<rect x="1349.85" y="652" width="2.3" height="6" fill="#86c240" />
<rect x="1359.85" y="652" width="2.3" height="6" fill="#86c240" />
<rect x="1369.85" y="652" width="2.3" height="6" fill="#86c240" />
<rect x="1379.85" y="652" width="2.3" height="6" fill="#86c240" />
<rect x="1389.85" y="652" width="2.3" height="6" fill="#86c240" />
<rect x="1399.85" y="652" width="2.3" height="6" fill="#86c240" />
<rect x="1409.85" y="652" width="2.3" height="6" fill="#86c240" />
<rect x="1419.85" y="652" width="2.3" height="6" fill="#86c240" />
<rect x="1429.85" y="652" width="2.3" height="6" fill="#86c240" />
<rect x="1439.85" y="652" width="2.3" height="6" fill="#86c240" />
<rect x="1453" y="653" width="2.3" height="6" fill="#86c240" />
<rect x="1463" y="653" width="2.3" height="6" fill="#86c240" />
<rect x="1473" y="653" width="2.3" height="6" fill="#86c240" />
<line x1="1464.2" y1="661" x2="1464.2" y2="670" stroke="#111" stroke-width="2" stroke-dasharray="1.5,1"/>
<rect x="546.75" y="660" width="1.5" height="6" fill="#9a9aa4" />
<rect x="563.23" y="660" width="1.5" height="6" fill="#9a9aa4" />
<rect x="579.71" y="660" width="1.5" height="6" fill="#9a9aa4" />
<rect x="596.19" y="660" width="1.5" height="6" fill="#9a9aa4" />
<rect x="612.67" y="660" width="1.5" height="6" fill="#9a9aa4" />
<rect x="629.15" y="660" width="1.5" height="10" fill="#9a9aa4" />
<rect x="645.63" y="660" width="1.5" height="6" fill="#9a9aa4" />
<rect x="662.11" y="660" width="1.5" height="6" fill="#9a9aa4" />
<rect x="678.59" y="660" width="1.5" height="6" fill="#9a9aa4" />
<rect x="695.07" y="660" width="1.5" height="6" fill="#9a9aa4" />
<rect x="711.55" y="660" width="1.5" height="6" fill="#9a9aa4" />
<rect x="728.03" y="660" width="1.5" height="6" fill="#9a9aa4" />
<rect x="744.51" y="660" width="1.5" height="6" fill="#9a9aa4" />
<rect x="760.99" y="660" width="1.5" height="6" fill="#9a9aa4" />
<rect x="777.47" y="660" width="1.5" height="6" fill="#9a9aa4" />
<rect x="793.95" y="660" width="1.5" height="10" fill="#9a9aa4" />
<rect x="810.43" y="660" width="1.5" height="6" fill="#9a9aa4" />
<rect x="826.91" y="660" width="1.5" height="6" fill="#9a9aa4" />
<rect x="843.39" y="660" width="1.5" height="6" fill="#9a9aa4" />
<rect x="859.87" y="660" width="1.5" height="6" fill="#9a9aa4" />
<rect x="876.35" y="660" width="1.5" height="6" fill="#9a9aa4" />
<rect x="892.83" y="660" width="1.5" height="6" fill="#9a9aa4" />
<rect x="909.31" y="660" width="1.5" height="6" fill="#9a9aa4" />
<rect x="925.79" y="660" width="1.5" height="6" fill="#9a9aa4" />
<rect x="942.27" y="660" width="1.5" height="6" fill="#9a9aa4" />
<rect x="958.75" y="660" width="1.5" height="10" fill="#9a9aa4" />
<rect x="975.23" y="660" width="1.5" height="6" fill="#9a9aa4" />
<rect x="991.71" y="660" width="1.5" height="6" fill="#9a9aa4" />
<rect x="1008.19" y="660" width="1.5" height="6" fill="#9a9aa4" />
<rect x="1024.67" y="660" width="1.5" height="6" fill="#9a9aa4" />
<rect x="1041.15" y="660" width="1.5" height="6" fill="#9a9aa4" />
<rect x="1057.63" y="660" width="1.5" height="6" fill="#9a9aa4" />
<rect x="1074.11" y="660" width="1.5" height="6" fill="#9a9aa4" />
<rect x="1090.59" y="660" width="1.5" height="6" fill="#9a9aa4" />
<rect x="1107.07" y="660" width="1.5" height="6" fill="#9a9aa4" />
<rect x="1123.55" y="660" width="1.5" height="10" fill="#9a9aa4" />
<rect x="1140.03" y="660" width="1.5" height="6" fill="#9a9aa4" />
<rect x="1156.51" y="660" width="1.5" height="6" fill="#9a9aa4" />
<rect x="1172.99" y="660" width="1.5" height="6" fill="#9a9aa4" />
<rect x="1189.47" y="660" width="1.5" height="6" fill="#9a9aa4" />
<rect x="1205.95" y="660" width="1.5" height="6" fill="#9a9aa4" />
<rect x="1222.43" y="660" width="1.5" height="6" fill="#9a9aa4" />
<rect x="1238.91" y="660" width="1.5" height="6" fill="#9a9aa4" />
<rect x="1255.39" y="660" width="1.5" height="6" fill="#9a9aa4" />
<rect x="1271.87" y="660" width="1.5" height="6" fill="#9a9aa4" />
<rect x="1288.35" y="660" width="1.5" height="10" fill="#9a9aa4" />
<rect x="1304.83" y="660" width="1.5" height="6" fill="#9a9aa4" />
<rect x="1321.31" y="660" width="1.5" height="6" fill="#9a9aa4" />
<rect x="1337.79" y="660" width="1.5" height="6" fill="#9a9aa4" />
<rect x="1354.27" y="660" width="1.5" height="6" fill="#9a9aa4" />
<rect x="1370.75" y="660" width="1.5" height="6" fill="#9a9aa4" />
<rect x="1387.23" y="660" width="1.5" height="6" fill="#9a9aa4" />
<rect x="1403.71" y="660" width="1.5" height="6" fill="#9a9aa4" />
<rect x="1420.19" y="660" width="1.5" height="6" fill="#9a9aa4" />
<rect x="1436.67" y="660" width="1.5" height="6" fill="#9a9aa4" />
<rect x="477" y="708" width="43" height="4" fill="#b0b0b6" />
<rect x="588" y="708" width="890" height="3.5" fill="#b0b0b6" />
<rect x="520" y="712" width="917" height="82" fill="#323139" />
<rect x="591" y="712" width="846" height="4" fill="#1d1d1f" />
<rect x="520" y="712" width="29" height="82" fill="#1f1f1f" />
<rect x="517" y="708" width="3" height="90" fill="#b0b0b6" />
<rect x="588" y="708" width="3" height="90" fill="#b0b0b6" />
<rect x="517" y="794" width="74" height="4" fill="#b0b0b6" />
<rect x="591" y="794" width="846" height="3.5" fill="#222224" />
<rect x="1436" y="712" width="1.5" height="85" fill="#222224" />
<line x1="580" y1="717" x2="1437" y2="717" stroke="#5c5c62" stroke-width="1" />
<polygon points="540,794 540,774 543,765 545,756 545,713 549,712 549,794" fill="#45444d" />
<polyline points="540,774 543,765 545,756 545,713 549,712" fill="none" stroke="#7d7f88" stroke-width="1.2"/>
<rect x="549" y="712" width="31" height="82" fill="#545a75" />
<rect x="575" y="712" width="5" height="6" fill="#2e3446" />
<rect x="549" y="754" width="25" height="23" fill="#6699c8" />
<rect x="574" y="768" width="6" height="24" fill="#6699c8" />
<rect x="549" y="777" width="25" height="8" fill="#8aaa87" />
<rect x="549" y="785" width="25" height="8" fill="#8b86d2" />
<rect x="574" y="792" width="6" height="2" fill="#8b86d2" />
<rect x="545" y="770" width="4" height="24" fill="#5880a0" />
<rect x="580" y="712" width="8" height="5" fill="#1f1f1f" />
<rect x="580" y="717" width="8" height="59" fill="#45444d" />
<rect x="591" y="776" width="846" height="15.5" fill="#3d5a70" />
<rect x="580" y="776" width="8" height="16" fill="#5880a0" />
<rect x="580" y="791.5" width="857" height="1.2" fill="#5f7a45" />
<rect x="580" y="792.7" width="857" height="1.3" fill="#6a508a" />
<rect x="548.5" y="712" width="1.6" height="82" fill="#a5a5b0" />
<rect x="579.5" y="712" width="1.6" height="82" fill="#a5a5b0" />
<clipPath id="zc"><rect x="740" y="713" width="60" height="81"/></clipPath>
<g clip-path="url(#zc)"><polyline points="774.0,711.5 767.0,719.5 774.0,727.6 767.0,735.6 774.0,743.7 767.0,751.7 774.0,759.8 767.0,767.8 774.0,775.9 767.0,783.9 774.0,792.0" fill="none" stroke="#5a5a5e" stroke-width="8.8"/>
<polyline points="774.0,711.5 767.0,719.5 774.0,727.6 767.0,735.6 774.0,743.7 767.0,751.7 774.0,759.8 767.0,767.8 774.0,775.9 767.0,783.9 774.0,792.0" fill="none" stroke="#1c1c1c" stroke-width="5.8"/></g>
<polygon points="492,753 502,743 502,763" fill="#a8a8b0" />
<polygon points="1453,743.7 1453,762 1463,753" fill="#a8a8b0" />
<polygon points="1490,318 1500.2,308 1510,316 1522,306 1522,312 1510,322 1500.2,314.2 1490,324" fill="#878893"/>
<polygon points="1490,357.6 1499.2,348 1510.8,355.7 1522,346 1522,375.8 1490,375.8" fill="#5f616b" />
<polygon points="1490,401.6 1499.2,392 1510.8,399.7 1522,390 1522,419.8 1490,419.8" fill="#3d9fc9" />
<polygon points="1490,445.6 1499.2,436 1510.8,443.7 1522,434 1522,463.8 1490,463.8" fill="#d67a8a" />
<polygon points="1490,489.6 1499.2,480 1510.8,487.7 1522,478 1522,507.8 1490,507.8" fill="#84b878" />
<polygon points="1490,533.6 1499.2,524 1510.8,531.7 1522,522 1522,551.8 1490,551.8" fill="#a98ad8" />
<polygon points="1490,577.6 1499.2,568 1510.8,575.7 1522,566 1522,595.8 1490,595.8" fill="#7a63a8" />
<rect x="1490" y="612" width="32" height="24.4" fill="#c9a550" />
<path d="M1490 655 h14 v14 h18" fill="none" stroke="#7fba4a" stroke-width="5" stroke-linejoin="miter"/>
<rect x="1596" y="663" width="2.3" height="6" fill="#6fae3c" />
<rect x="1607" y="663" width="2.3" height="6" fill="#6fae3c" />
<rect x="1618" y="663" width="2.3" height="6" fill="#6fae3c" />
<rect x="1629" y="663" width="2.3" height="6" fill="#6fae3c" />
<rect x="789.5" y="830" width="23.5" height="24" rx="4.5" fill="#45474d" stroke="#1c1c1c" stroke-width="1.8"/>
<path d="M793.5 843 l5.5 6.2 l10.2 -12.8" fill="none" stroke="#c8c8cc" stroke-width="3.6"/>
<rect x="467" y="921" width="404" height="516" fill="#705d22" />
<polygon points="807.95,987.1 824.9,970.3 831.65,976.7 815,994 807.95,994" fill="#a8a8ae" />
<polygon points="827.7,967.4 831.5,963.6 834,963.4 836.5,965.5 838.7,968.5 834.6,974.3" fill="#a8a8ae" />
<rect x="487" y="1017" width="30" height="30" fill="#58585c" />
<rect x="488" y="1058" width="28" height="28" fill="#858585" stroke="#2a2a2a" stroke-width="2"/>
<rect x="487" y="1097" width="30" height="30" fill="#bdbdbd" />
<rect x="821" y="1031" width="30" height="330" fill="#58585c" />
<rect x="812" y="1294" width="28" height="66" fill="#858585" stroke="#2a2a2a" stroke-width="2"/>
<rect x="801" y="1355" width="30" height="6" fill="#bdbdbd" />
<rect x="488.3" y="1390" width="25.5" height="26" rx="4.5" fill="#45474d" stroke="#1c1c1c" stroke-width="1.8"/>
<path d="M492.5 1403.5 l5.5 6.2 l10.5 -13" fill="none" stroke="#c8c8cc" stroke-width="3.6"/></svg>
<div class="t" style="left:484px;top:350.5px;font-size:22.5px;color:#a4a4ae;transform:translate(-50%,-50%) rotate(-90deg);transform-origin:center">20.0 MB</div>
<div class="t" style="left:484px;top:472.5px;font-size:22.5px;color:#a4a4ae;transform:translate(-50%,-50%) rotate(-90deg);transform-origin:center">10.0 MB</div>
<div class="t" style="left:67.0px;top:31.6px;font-size:26.5px;color:#dfe1e5;letter-spacing:0.15px;">Analysis #1</div>
<div class="t" style="left:291.0px;top:34.5px;font-size:19.5px;color:#52a058;font-weight:bold;letter-spacing:3.06px;">C#</div>
<div class="t" style="left:331.0px;top:31.6px;font-size:26.5px;color:#dfe1e5;letter-spacing:0.63px;">ClosureAllocations.cs</div>
<div class="t" style="left:685.0px;top:34.5px;font-size:19.5px;color:#52a058;font-weight:bold;letter-spacing:3.06px;">C#</div>
<div class="t" style="left:725.5px;top:31.6px;font-size:26.5px;color:#dfe1e5;letter-spacing:0.52px;">EnumeratingCollection.cs</div>
<div class="t" style="left:1128.0px;top:36.0px;font-size:16px;color:#52a058;letter-spacing:1.55px;">C#</div>
<div class="t" style="left:1165.5px;top:31.6px;font-size:26.5px;color:#5b91cc;letter-spacing:1.10px;">dpa-bad-patterns.csproj</div>
<div class="t" style="left:1557.0px;top:34.5px;font-size:19.5px;color:#52a058;font-weight:bold;letter-spacing:3.56px;">C#</div>
<div class="t" style="left:1597.0px;top:31.6px;font-size:26.5px;color:#5b91cc;letter-spacing:0.64px;">LinqAllocations.cs</div>
<div class="t" style="left:15.5px;top:105.7px;font-size:24px;color:#c7ccd6;font-weight:bold;letter-spacing:-0.79px;">Profiling</div>
<div class="t" style="left:15.5px;top:144.5px;font-size:23px;color:#a4abbf;letter-spacing:-0.42px;">#12384 dpa-bad-patterns</div>
<div class="t" style="left:544.3px;top:106.1px;font-size:23.7px;color:#d0d0d6;letter-spacing:-0.28px;">Get Snapshot</div>
<div class="t" style="left:826.4px;top:106.2px;font-size:23.7px;color:#d0d0d6;letter-spacing:0.11px;">Full Allocation data:</div>
<div class="t" style="left:1038.0px;top:106.2px;font-size:23.7px;color:#e2e2e8;font-weight:bold;letter-spacing:1.40px;">Off</div>
<div class="t" style="left:1183.5px;top:106.2px;font-size:23.7px;color:#d0d0d6;letter-spacing:-1.17px;">Force GC</div>
<div class="t" style="left:1388.0px;top:106.2px;font-size:23.7px;color:#77777a;letter-spacing:-0.61px;">Detach</div>
<div class="t" style="left:1565.5px;top:106.2px;font-size:23.7px;color:#d0d0d6;letter-spacing:-0.36px;">Kill</div>
<div class="t" style="left:487.0px;top:156.9px;font-size:24px;color:#b4a8a8;letter-spacing:-0.32px;">No issues detected</div>
<div class="t" style="left:1279.8px;top:158.7px;font-size:24px;color:#b4a8a8;letter-spacing:-0.90px;">Selected:</div>
<div class="t" style="left:1382.8px;top:158.7px;font-size:24px;color:#a8aabd;letter-spacing:-1.31px;">2.543s</div>
<div class="t" style="left:1457.8px;top:158.7px;font-size:24px;color:#b4a8a8;letter-spacing:-1.16px;">GC Time:</div>
<div class="t" style="left:1560.8px;top:158.7px;font-size:24px;color:#a8aabd;letter-spacing:-0.91px;">845ms</div>
<div class="t" style="left:1645.5px;top:158.7px;font-size:24px;color:#b4b6c4;letter-spacing:-0.84px;">33.2 %</div>
<div class="t" style="left:1725.9px;top:158.7px;font-size:24px;color:#7aa6ec;letter-spacing:-0.40px;">Allocated: ~1.23 GB</div>
<div class="t" style="left:1500.3px;top:258.5px;font-size:23px;color:#d0d0d6;letter-spacing:0.61px;">#12384 dpa-bad-patterns</div>
<div class="t" style="left:1539.0px;top:308.3px;font-size:24px;color:#b5abab;letter-spacing:-0.42px;">Total used</div>
<div class="t" style="left:1856.2px;top:307.6px;font-size:23px;color:#aeb0c0;">28.0</div>
<div class="t" style="left:1905.0px;top:307.6px;font-size:23px;color:#aeb0c0;">MB</div>
<div class="t" style="left:1539.0px;top:351.5px;font-size:24px;color:#b5abab;letter-spacing:-0.11px;">Unmanaged memory</div>
<div class="t" style="left:1856.2px;top:350.8px;font-size:23px;color:#aeb0c0;">22.2</div>
<div class="t" style="left:1905.0px;top:350.8px;font-size:23px;color:#aeb0c0;">MB</div>
<div class="t" style="left:1539.0px;top:396.0px;font-size:24px;color:#b5abab;letter-spacing:-0.16px;">Heap generation 0</div>
<div class="t" style="left:1869.0px;top:395.3px;font-size:23px;color:#aeb0c0;">5.1</div>
<div class="t" style="left:1905.0px;top:395.3px;font-size:23px;color:#aeb0c0;">MB</div>
<div class="t" style="left:1539.0px;top:439.7px;font-size:24px;color:#b5abab;letter-spacing:-0.24px;">Heap generation 1</div>
<div class="t" style="left:1856.2px;top:439.0px;font-size:23px;color:#aeb0c0;">24.0</div>
<div class="t" style="left:1905.0px;top:439.0px;font-size:23px;color:#aeb0c0;">B</div>
<div class="t" style="left:1539.0px;top:483.7px;font-size:24px;color:#b5abab;letter-spacing:-0.19px;">Heap generation 2</div>
<div class="t" style="left:1843.4px;top:483.0px;font-size:23px;color:#aeb0c0;">341.3</div>
<div class="t" style="left:1905.0px;top:483.0px;font-size:23px;color:#aeb0c0;">KB</div>
<div class="t" style="left:1539.0px;top:527.7px;font-size:24px;color:#b5abab;letter-spacing:-0.92px;">LOH and POH</div>
<div class="t" style="left:1843.4px;top:527.0px;font-size:23px;color:#aeb0c0;">317.7</div>
<div class="t" style="left:1905.0px;top:527.0px;font-size:23px;color:#aeb0c0;">KB</div>
<div class="t" style="left:1539.0px;top:572.1px;font-size:24px;color:#b5abab;letter-spacing:-0.49px;">Allocated in LOH since GC</div>
<div class="t" style="left:1869.0px;top:571.4px;font-size:23px;color:#aeb0c0;">0.0</div>
<div class="t" style="left:1905.0px;top:571.4px;font-size:23px;color:#aeb0c0;">B</div>
<div class="t" style="left:1539.0px;top:614.5px;font-size:24px;color:#b5abab;letter-spacing:-1.15px;">GC Time</div>
<div class="t" style="left:1539.0px;top:655.4px;font-size:24px;color:#b5abab;letter-spacing:-0.40px;">Full /</div>
<div class="t" style="left:1637.5px;top:655.4px;font-size:24px;color:#b5abab;letter-spacing:-0.03px;">sampled allocation data</div>
<div class="t" style="left:625.0px;top:680.9px;font-size:19.5px;color:#a4a4ae;">1 s</div>
<div class="t" style="left:790.0px;top:680.9px;font-size:19.5px;color:#a4a4ae;">2 s</div>
<div class="t" style="left:955.0px;top:680.9px;font-size:19.5px;color:#a4a4ae;">3 s</div>
<div class="t" style="left:1120.0px;top:680.9px;font-size:19.5px;color:#a4a4ae;">4 s</div>
<div class="t" style="left:1285.0px;top:680.9px;font-size:19.5px;color:#a4a4ae;">5 s</div>
<div class="t" style="left:1441.0px;top:676.6px;font-size:23.5px;color:#a4a4ae;">Now</div>
<div class="t" style="left:472.0px;top:827.7px;font-size:32px;color:#c8c8ce;letter-spacing:-0.34px;">Memory Snapshots</div>
<div class="t" style="left:823.0px;top:832.4px;font-size:24px;color:#c8c8ce;letter-spacing:-0.09px;">Show unmanaged memory</div>
<div class="t" style="left:487.7px;top:964.5px;font-size:26px;color:#6fa0ea;font-weight:bold;letter-spacing:-0.16px;">Snapshot #1</div>
<div class="t" style="left:531.4px;top:1020.5px;font-size:24px;color:#d4d4d8;letter-spacing:-0.17px;">28.06 MB total</div>
<div class="t" style="left:531.4px;top:1060.5px;font-size:24px;color:#d4d4d8;letter-spacing:-0.40px;">5.74 MB .NET, total</div>
<div class="t" style="left:530.5px;top:1100.5px;font-size:24px;color:#d4d4d8;letter-spacing:-0.91px;">482.3 KB .NET, used</div>
<div class="t" style="left:487.5px;top:1156.3px;font-size:24px;color:#d4d4d8;">Objects:</div>
<div class="t" style="left:518.0px;top:1204.4px;font-size:24px;color:#6fa0ea;letter-spacing:-0.30px;">3.6 K live</div>
<div class="t" style="left:518.0px;top:1243.7px;font-size:24px;color:#968b70;letter-spacing:0.12px;">No unreachable</div>
<div class="t" style="left:518.0px;top:1283.7px;font-size:24px;color:#968b70;letter-spacing:0.20px;">No marked</div>
<div class="t" style="left:487.5px;top:1340.4px;font-size:24px;color:#6fa0ea;font-weight:bold;letter-spacing:-0.50px;">Memory allocations</div>
<div class="t" style="left:523.6px;top:1390.7px;font-size:24px;color:#d4d4d8;letter-spacing:0.11px;">Add to comparison</div>
</body></html>
